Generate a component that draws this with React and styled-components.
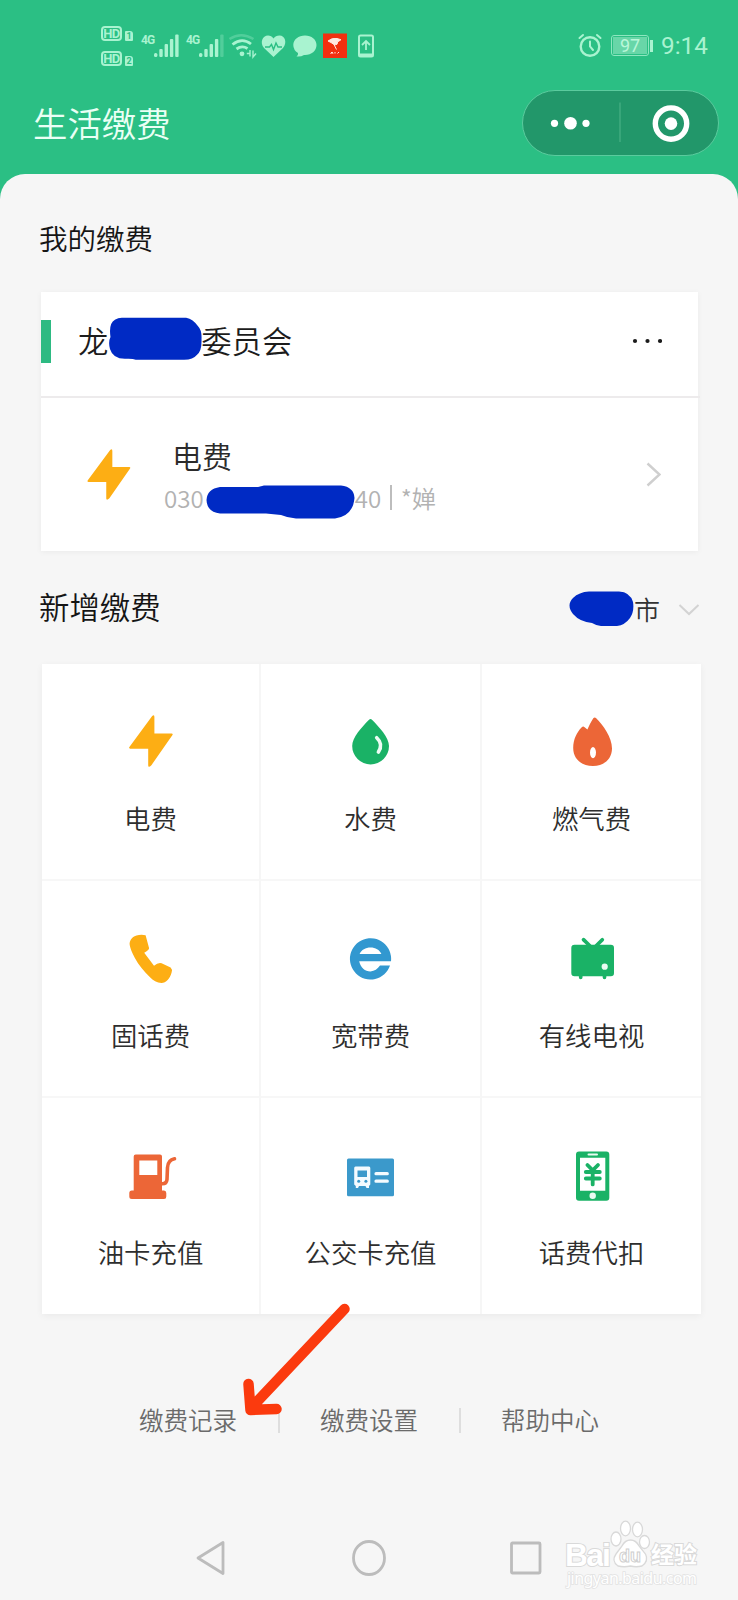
import React from 'react'
import styled, { createGlobalStyle } from 'styled-components'

const GlobalStyle = createGlobalStyle`
  * { box-sizing: border-box; }
  body {
    margin: 0;
    background: #f6f6f6;
    font-family: "Noto Sans CJK SC", "Noto Sans", sans-serif;
    font-weight: 350;
  }
  svg { display: block; flex: none; }
`

// styled
const Phone = styled.div`
  position: relative;
  width: 738px; height: 1600px;
  display: flex; flex-direction: column;
  background: #2bbf84;
  overflow: hidden;
`
const StatusBar = styled.div`
  height: 90px;
  padding: 1px 31px 0 101px;
  display: flex; justify-content: space-between; align-items: center;
  color: #a9f3d0;
`
const StatusGroup = styled.div`
  display: flex; align-items: center;
`
const NetGroup = styled.div`
  display: flex; align-items: center;
  margin-right: ${(props) => props.$space}px;
`
const HdColumn = styled.div`
  display: flex; flex-direction: column; gap: 10px;
  margin-right: 8px;
`
const HdRow = styled.div`
  display: flex; align-items: flex-end; gap: 3px;
`
const HdBadge = styled.div`
  width: 21px; height: 15px;
  border: 2px solid #a9f3d0; border-radius: 4px;
  font: bold 13px/11px Roboto, sans-serif;
  letter-spacing: -0.5px;
  text-align: center;
`
const SimBadge = styled.div`
  width: 8px; height: 10px;
  background: #a9f3d0; color: #2bbf84;
  border-radius: 1px 3px 1px 1px;
  font: bold 9px/10px Roboto, sans-serif;
  text-align: center;
`
const NetLabel = styled.div`
  width: 13px;
  font: bold 12px/12px Roboto, sans-serif;
  letter-spacing: -1px;
  align-self: flex-start;
`
const Battery = styled.div`
  width: 38px; height: 21px;
  padding: 1px;
  margin-left: 9px;
  border: 1.5px solid #8de6bf; border-radius: 3px;
`
const BatteryFill = styled.div`
  height: 100%;
  background: #68d6a8;
  font: 400 18px/17px Roboto, sans-serif;
  color: #b9f7d9;
  text-align: center;
`
const BatteryTip = styled.div`
  width: 3px; height: 12px;
  background: #a9f3d0;
  margin-left: 1px;
`
const Clock = styled.div`
  width: 46px;
  margin-left: 8px;
  font: 400 24.3px/30px Roboto, sans-serif;
  white-space: nowrap;
  color: #a9f3d0;
`
const TitleBar = styled.div`
  height: 84px;
  padding: 0 19px 0 33px;
  display: flex; justify-content: space-between; align-items: flex-start;
`
const Title = styled.h1`
  margin: 0;
  font-size: 34.4px; line-height: 65px; font-weight: 350;
  color: #eafff5;
`
const Capsule = styled.div`
  width: 197px; height: 66px;
  border: 1.5px solid #5bcb9e; border-radius: 33px;
  background: #22976a;
`
const Sheet = styled.main`
  flex: 1;
  padding: 46px 37px 0 39px;
  border-radius: 25px 25px 0 0;
  background: #f6f6f6;
  display: flex; flex-direction: column;
`
const SectionTitle = styled.h2`
  margin: 0;
  font-size: ${(props) => props.$size}px; line-height: 36px; font-weight: 350;
  color: #151515;
`
const AccountCard = styled.section`
  width: 657px; height: 259px;
  margin: 36px 0 0 2px;
  background: #fff;
  box-shadow: 0 1px 6px rgba(0, 0, 0, 0.05);
`
const AccountHead = styled.div`
  width: 659px; height: 106px;
  padding: 0 38px 0 0;
  display: flex; align-items: center;
  border-bottom: 2px solid #edebec;
`
const Marker = styled.div`
  width: 10px; height: 43px;
  margin: -6px 27px 0 0;
  background: #2dba82;
`
const AccountName = styled.div`
  flex: 1;
  margin-top: -9px;
  display: flex; align-items: center;
  font-size: 30.3px; line-height: 44px;
  color: #1c1c1c;
`
const HiddenName = styled.svg`
  margin: -1px -1px 0 1px;
`
const AccountRow = styled.div`
  height: 153px;
  padding: 0 37px 0 46px;
  display: flex; align-items: center;
`
const AccountInfo = styled.div`
  flex: 1;
  margin: 2px 0 0 33px;
`
const BillName = styled.div`
  padding-left: 8px;
  font-size: 30px; line-height: 44px;
  color: #2b2b2b;
`
const BillNumber = styled.div`
  height: 42px;
  display: flex; align-items: center;
  font-size: 24.1px;
  color: #b2b2b2;
`
const HiddenDigits = styled.svg`
  margin: 8px 0 0 2px;
`
const NumberBar = styled.span`
  width: 1.5px; height: 25px;
  margin: 0 9px 0 9px;
  background: #bdbdbd;
`
const AddHead = styled.div`
  margin-top: 37px;
  height: 36px;
  display: flex; justify-content: space-between; align-items: center;
`
const City = styled.div`
  margin-top: 6px;
  display: flex; align-items: center;
  font-size: 26px; line-height: 36px;
  color: #333;
`
const Grid = styled.section`
  width: 659px; height: 650px;
  margin: 40px 0 0 3px;
  display: grid;
  grid-template-columns: 219px 221px 219px;
  grid-template-rows: 217px 217px 216px;
  background: #fff;
  box-shadow: 0 2px 7px rgba(0, 0, 0, 0.05);
`
const Cell = styled.div`
  padding-top: 48px;
  display: flex; flex-direction: column; align-items: center;
  border-right: ${(props) => (props.$lastCol ? 'none' : '2px solid #f6f6f6')};
  border-bottom: ${(props) => (props.$lastRow ? 'none' : '2px solid #f7f7f7')};
`
const CellIcon = styled.svg`
  width: 60px; height: 60px;
`
const CellLabel = styled.div`
  margin-top: 27px;
  font-size: 26.4px; line-height: 38px;
  color: #2e2e2e;
`
const Links = styled.nav`
  margin: 88px auto 0 100px;
  height: 36px;
  display: flex; align-items: center;
`
const FootLink = styled.a`
  font-size: 24.5px; line-height: 36px;
  color: #6b6b6b;
`
const LinkBar = styled.span`
  width: 2px; height: 25px;
  margin: 0 40.5px;
  background: #dedede;
`
const SystemNav = styled.div`
  margin: 100px 0 0 155px;
  width: 349px;
  display: flex; justify-content: space-between; align-items: center;
`
const Arrow = styled.svg`
  position: absolute;
  left: 236px; top: 1298px;
`
const Watermark = styled.svg`
  position: absolute;
  left: 560px; top: 1514px;
`

const YELLOW = '#fdae14'
const GREEN = '#1ab266'
const ORANGE = '#ec6637'
const BLUE = '#3298d0'
const INK = '#002ac4'

const boltPath = 'M31.2 4 Q33.4 2.2 33.4 5 V21.4 H50.6 Q52.4 21.6 51.3 23.2 L30.4 53.2 Q27.2 56.2 27.2 53.2 V36.7 H9.2 Q7.4 36.5 8.4 34.9 Z'

const ICONS = {
  bolt: <path fill={YELLOW} d={boltPath} />,
  drop: (
    <>
      <path fill={GREEN} d="M28 7.7 Q29.5 6.2 31 7.7 C38 15 48 25 48 34 A18.3 18.3 0 0 1 11.2 34 C11.2 25 21 15 28 7.7 Z" />
      <path d="M35.7 25.7 Q42.5 32 37.4 40" fill="none" stroke="#eefcf4" strokeWidth="3.6" strokeLinecap="round" />
    </>
  ),
  flame: (
    <>
      <path fill={ORANGE} d="M31.3 6.2 Q32.7 4.6 34.2 6.2 C41 13 50 25 50 36.5 C50 47 42 54 31 54 C19 54 11.2 46.5 11.2 36 C11.2 27 15 20 19.5 15.4 Q21.2 13.8 22.6 15.2 L25.4 17.6 C27 14 29 9.5 31.3 6.2 Z" />
      <ellipse cx="31" cy="40.6" rx="3" ry="5.6" fill="#fff" />
    </>
  ),
  phone: (
    <path fill={YELLOW} d="M15.5 6.4 Q20 5.4 24.6 6.2 L28.1 19.2 Q28 21 23.2 23.8 L33 36.8 Q37 33.2 40.6 34.2 L49.6 38.6 Q51.6 40.4 50.6 43.6 C49 50 45 54 40.5 54 C36 53.8 32 51.5 29 48.3 C23 42.5 17.5 36 14 29.3 C11 23.5 8.5 18 8.6 14.3 C9.2 10 12 7.2 15.5 6.4 Z" />
  ),
  net: (
    <path fill={BLUE} fillRule="evenodd" d="M50 32.2 H18.2 C19.5 38.5 24 42.4 29.5 42.4 C33.5 42.4 36.6 40 39 36.6 H49 A20.6 20.6 0 1 1 50 32.2 Z M18.6 25 C20.5 20.8 24.6 18.5 29.5 18.5 C34.5 18.5 38.5 20.8 40.4 25 Z" />
  ),
  tv: (
    <>
      <rect x="9.3" y="15.7" width="42.7" height="31.5" rx="3.2" fill={GREEN} />
      <path d="M21.5 10.7 L28 17 M40.3 10.7 L34 17 M18.7 46 V48.3 M42.5 46 V48.3" stroke={GREEN} strokeWidth="3.7" strokeLinecap="round" />
      <circle cx="42.7" cy="37.7" r="3.1" fill="#e9fbf1" />
    </>
  ),
  gas: (
    <>
      <path fill={ORANGE} fillRule="evenodd" d="M14.7 8.5 H39 Q41 8.5 41 10.5 V44.5 H43 Q45.3 44.5 45.3 47 V50.5 Q45.3 53 43 53 H10.8 Q8.3 53 8.3 50.5 V47 Q8.3 44.5 10.8 44.5 H12.7 V10.5 Q12.7 8.5 14.7 8.5 Z M18.3 14.5 V29 H36.3 V14.5 Z" />
      <path d="M41 37.8 Q45.5 38 46 33.5 L46.5 21.5 Q47 14 53.5 12.8" fill="none" stroke={ORANGE} strokeWidth="3.6" strokeLinecap="round" />
    </>
  ),
  card: (
    <>
      <rect x="6" y="12.5" width="47" height="37.7" rx="1.5" fill="#3b99cb" />
      <path fill="#f4fbff" fillRule="evenodd" d="M14.5 20.5 H28 Q29.3 20.5 29.3 22 V38.5 L28 40 V42 H25.5 L24.5 40 H18 L17 42 H14.8 V40 L13.2 38.5 V22 Q13.2 20.5 14.5 20.5 Z M16.5 24.5 V31 H26 V24.5 Z" />
      <circle cx="17.7" cy="35.3" r="1.5" fill="#3b99cb" />
      <circle cx="24.9" cy="35.3" r="1.5" fill="#3b99cb" />
      <path d="M35 27.7 H46.3 M35 35.2 H46.3" stroke="#f4fbff" strokeWidth="3.2" strokeLinecap="round" />
    </>
  ),
  mobile: (
    <>
      <path fill={GREEN} fillRule="evenodd" d="M17 5.5 H44.3 Q47.3 5.5 47.3 8.5 V51.8 Q47.3 54.8 44.3 54.8 H17 Q14 54.8 14 51.8 V8.5 Q14 5.5 17 5.5 Z M18 11.8 V44.8 H43.3 V11.8 Z" />
      <path d="M26.5 8.6 H35" stroke="#e9fbf1" strokeWidth="2" strokeLinecap="round" />
      <circle cx="30.7" cy="49.8" r="3.2" fill="#e9fbf1" />
      <path d="M25.4 19 L30.7 24.4 L36 19 M23.8 26 H37.8 M23.8 32.5 H37.8 M30.7 26 V38.4" fill="none" stroke={GREEN} strokeWidth="3.8" strokeLinecap="round" />
    </>
  ),
}

const services = [
  { icon: 'bolt', label: '电费' },
  { icon: 'drop', label: '水费' },
  { icon: 'flame', label: '燃气费' },
  { icon: 'phone', label: '固话费' },
  { icon: 'net', label: '宽带费' },
  { icon: 'tv', label: '有线电视' },
  { icon: 'gas', label: '油卡充值' },
  { icon: 'card', label: '公交卡充值' },
  { icon: 'mobile', label: '话费代扣' },
]

const Signal = ({ weak }) => (
  <svg width="25" height="24" viewBox="0 0 25 24" fill="#a9f3d0">
    <rect x="0" y="19" width="3.4" height="4" rx="1.5" />
    <rect x="5.3" y="15" width="3.4" height="8" rx="1" />
    <rect x="10.6" y="10" width="3.4" height="13" rx="1" />
    <rect x="15.9" y="5" width="3.4" height="18" rx="1" />
    <rect x="21.2" y="0.5" width="3.4" height="22.5" rx="1" opacity={weak ? 0.3 : 1} />
  </svg>
)

const StatusIcons = () => (
  <svg width="148" height="26" viewBox="228 32.5 148 26" fill="none" stroke="#a9f3d0">
    {/* wifi */}
    <path d="M229.5 38.5 Q241 31 253.5 38.5" strokeWidth="2.5" opacity="0.3" />
    <path d="M232.5 44 Q242 36.5 251 43.5 M236.5 48.5 Q242 44.5 247.5 48" strokeWidth="2.8" />
    <circle cx="242" cy="53.3" r="2.4" fill="#a9f3d0" stroke="none" />
    <path d="M246.8 53 L250 53 V49.5 M250 50 V56 M253 50 V56.5 L256 53" strokeWidth="1.4" />
    {/* health */}
    <path d="M273.5 56.5 L264 47.5 C259.5 42 262.5 35 268 35 Q271.5 35 273.5 38 Q275.5 35 279.5 35 C285 35 287.5 42 283 47.5 Z" fill="#a9f3d0" stroke="none" />
    <path d="M265 46.5 H269.5 L271.5 44 L273.5 49 L276 42.5 L278 46.5 H282" stroke="#2bbf84" strokeWidth="1.4" />
    {/* message */}
    <path d="M305 35 C311.5 35 316.5 39 316.5 44.5 C316.5 50.5 311 55 304 54.5 Q301 56.5 296.5 56 Q298.5 54.5 298 52.5 Q293.3 49.5 293.3 44.5 C293.3 39 298.5 35 305 35 Z" fill="#a9f3d0" stroke="none" />
    {/* app */}
    <rect x="323" y="33" width="24" height="24.5" fill="#f2300f" stroke="none" />
    <path d="M328 40.5 Q332 37 337 38 L341 39.2 L337.5 41.5 Q338 45 334 44 L331 42 Z M334 44 L336.5 49 M330.5 53 L332 51.5 L333 53 M335 53 V51.5 M337.5 53 L339 51.5" fill="#ffe9e2" stroke="#ffe9e2" strokeWidth="1" />
    {/* device */}
    <rect x="359" y="35" width="14" height="21" rx="1.5" strokeWidth="2" />
    <path d="M359 54.5 H373" strokeWidth="3" />
    <path d="M366 49.5 V41 M362 44.5 L366 40.5 L370 44.5" strokeWidth="1.8" />
  </svg>
)

const AlarmIcon = () => (
  <svg width="24" height="25" viewBox="0 0 24 25" fill="none" stroke="#a9f3d0" strokeLinecap="round">
    <circle cx="12" cy="13.5" r="9.3" strokeWidth="2.4" />
    <path d="M12 8.5 V13.5 L15 17" strokeWidth="2" />
    <path d="M1.5 5 L5 2 M19 2 L22.5 5" strokeWidth="2" />
  </svg>
)

const CapsuleIcons = () => (
  <svg width="194" height="63" viewBox="523.5 91 194 63" fill="#fff">
    <circle cx="555" cy="123.3" r="3.6" />
    <circle cx="571" cy="123.3" r="6.3" />
    <circle cx="586.5" cy="123.3" r="3.6" />
    <path d="M620.5 102.5 V142" stroke="#43ad82" strokeWidth="1.4" />
    <circle cx="671.5" cy="123.6" r="15.7" fill="none" stroke="#fff" strokeWidth="5.4" />
    <circle cx="671.5" cy="123.6" r="6.3" />
  </svg>
)

const App = () => {
  return (
    <>
      <GlobalStyle />
      <Phone>
        <StatusBar>
          <StatusGroup>
            <HdColumn>
              <HdRow><HdBadge>HD</HdBadge><SimBadge>1</SimBadge></HdRow>
              <HdRow><HdBadge>HD</HdBadge><SimBadge>2</SimBadge></HdRow>
            </HdColumn>
            <NetGroup $space={7}>
              <NetLabel>4G</NetLabel>
              <Signal />
            </NetGroup>
            <NetGroup $space={4}>
              <NetLabel>4G</NetLabel>
              <Signal weak />
            </NetGroup>
            <StatusIcons />
          </StatusGroup>
          <StatusGroup>
            <AlarmIcon />
            <Battery><BatteryFill>97</BatteryFill></Battery>
            <BatteryTip />
            <Clock>9:14</Clock>
          </StatusGroup>
        </StatusBar>

        <TitleBar>
          <Title>生活缴费</Title>
          <Capsule><CapsuleIcons /></Capsule>
        </TitleBar>

        <Sheet>
          <SectionTitle $size={28.5}>我的缴费</SectionTitle>

          <AccountCard>
            <AccountHead>
              <Marker />
              <AccountName>
                <span>龙</span>
                <HiddenName width="93" height="44" viewBox="0 0 94 44">
                  <path fill={INK} d="M13 0.5 H78 Q85 2 90 9 Q94 13 93.5 22 Q94 34 89 38 Q85 43 76 43 H27 Q24 41.5 16 42 Q4 42 1 32 Q-1 25 1.5 20 Q-0.5 6 6 2.5 Q9 0.5 13 0.5 Z" />
                </HiddenName>
                <span>委员会</span>
              </AccountName>
              <svg width="32" height="18" viewBox="0 0 32 18" fill="#1b1b1b">
                <circle cx="5" cy="6" r="2.1" />
                <circle cx="17.5" cy="6" r="2.1" />
                <circle cx="30" cy="6" r="2.1" />
              </svg>
            </AccountHead>
            <AccountRow>
              <svg width="44" height="51" viewBox="8 3 44 52"><path fill={YELLOW} d={boltPath} /></svg>
              <AccountInfo>
                <BillName>电费</BillName>
                <BillNumber>
                  <span>030</span>
                  <HiddenDigits width="149" height="34" viewBox="0 0 149 34">
                    <path fill={INK} d="M14 2 H52 L58 0.5 H135 Q148 2 148.5 13 Q147 31 129 33.5 H90 Q82 33 75 30 L60 28.5 H14 Q1 27 0.5 15 Q1 4 14 2 Z" />
                  </HiddenDigits>
                  <span>40</span>
                  <NumberBar />
                  <span>*婵</span>
                </BillNumber>
              </AccountInfo>
              <svg width="15" height="26" viewBox="0 0 15 26" fill="none" stroke="#cfcfcf" strokeWidth="2.4">
                <path d="M1.5 1.5 L13.5 12.5 L1.5 23.5" />
              </svg>
            </AccountRow>
          </AccountCard>

          <AddHead>
            <SectionTitle $size={30.4}>新增缴费</SectionTitle>
            <City>
              <svg width="65" height="36" viewBox="0 0 65 36">
                <path fill={INK} d="M20 0.5 H50 Q61 1 64 11 Q65.5 20 61 27 Q56 34 48 35 H32 Q27 34.5 23 32 Q11 31 4 23 Q-3 14 4 7 Q10 1 20 0.5 Z" />
              </svg>
              <span>市</span>
              <svg width="41" height="14" viewBox="0 0 41 14" fill="none" stroke="#d3d3d3" strokeWidth="2">
                <path d="M19.5 3 L29 12 L38.5 3" />
              </svg>
            </City>
          </AddHead>

          <Grid>
            {services.map((item, i) => (
              <Cell key={item.icon} $lastCol={i % 3 === 2} $lastRow={i > 5}>
                <CellIcon viewBox="0 0 60 60">{ICONS[item.icon]}</CellIcon>
                <CellLabel>{item.label}</CellLabel>
              </Cell>
            ))}
          </Grid>

          <Links>
            <FootLink>缴费记录</FootLink>
            <LinkBar />
            <FootLink>缴费设置</FootLink>
            <LinkBar />
            <FootLink>帮助中心</FootLink>
          </Links>

          <SystemNav>
            <svg width="34" height="40" viewBox="0 0 34 40" fill="none" stroke="#bcbcbc" strokeWidth="2.8" strokeLinejoin="round">
              <path d="M4 20 L29 4.500 V35.500 Z" />
            </svg>
            <svg width="36" height="38" viewBox="0 0 36 38" fill="none" stroke="#bcbcbc" strokeWidth="2.8">
              <ellipse cx="18" cy="19" rx="15.5" ry="16.5" />
            </svg>
            <svg width="34" height="36" viewBox="0 0 34 36" fill="none" stroke="#bcbcbc" strokeWidth="2.8">
              <rect x="2.5" y="3" width="28.5" height="30" rx="1" />
            </svg>
          </SystemNav>
        </Sheet>

        <Arrow width="120" height="126" viewBox="236 1298 120 126" fill="none" stroke="#fb3a0e" strokeWidth="10.5" strokeLinecap="round" strokeLinejoin="round">
          <path d="M344.5 1309 L254 1405 M248.5 1384 L250.5 1410 L276.5 1409" />
        </Arrow>

        <Watermark width="146" height="80" viewBox="560 1514 146 80" fill="#fff" stroke="#d9d9d9" strokeWidth="1.3">
          <g fontWeight="700" paintOrder="stroke" strokeWidth="2">
            <text x="565" y="1566" fontSize="32" fontFamily='"Liberation Sans", sans-serif' textLength="46">Bai</text>
            <text x="651" y="1563" fontSize="23" fontFamily='"Noto Sans CJK SC", sans-serif' textLength="46">经验</text>
          </g>
          <ellipse cx="616" cy="1539" rx="5" ry="7" />
          <ellipse cx="625.5" cy="1528.5" rx="5" ry="7.3" />
          <ellipse cx="637.5" cy="1529.5" rx="5" ry="7.3" />
          <ellipse cx="644.5" cy="1542" rx="5" ry="6.5" />
          <path d="M630.5 1540 Q636 1540 639 1546 L645.5 1554 Q649 1561 642 1566 Q636 1567.5 630.5 1566 Q624 1567.5 618 1566 Q611 1561 616 1554 L622 1546 Q625 1540 630.5 1540 Z" />
          <text x="619" y="1562" fontSize="18" fontFamily='"Liberation Sans", sans-serif' fontWeight="700" stroke="#cfcfcf" strokeWidth="1" textLength="22">du</text>
          <text x="567" y="1584" fontSize="16" fontFamily='"Noto Sans", sans-serif' fontWeight="400" strokeWidth="1.6" stroke="#e2e2e2" paintOrder="stroke" textLength="130">jingyan.baidu.com</text>
        </Watermark>
      </Phone>
    </>
  )
}

export default App
